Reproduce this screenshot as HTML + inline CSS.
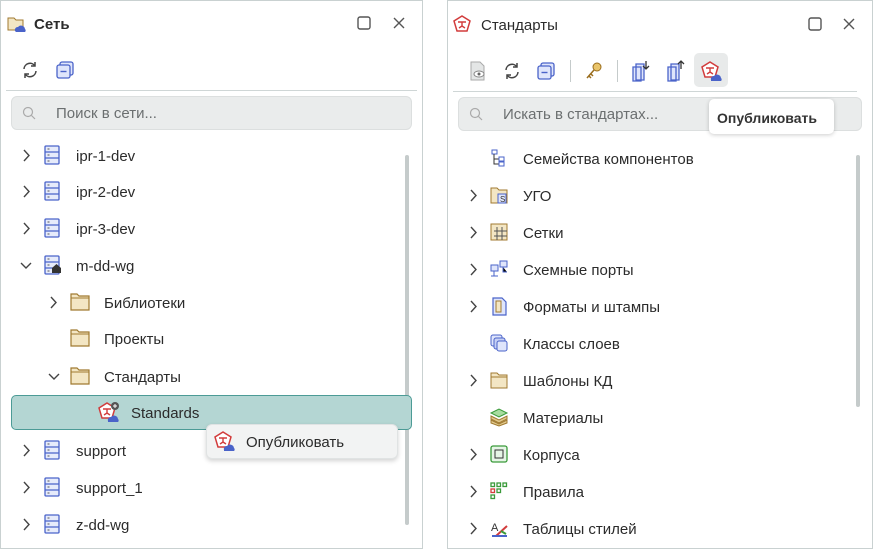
<!DOCTYPE html>
<html><head><meta charset="utf-8"><style>
*{box-sizing:border-box;margin:0;padding:0}
body{width:873px;height:550px;background:#fff;font-family:"Liberation Sans","DejaVu Sans",sans-serif;color:#2b2b2b;position:relative;overflow:hidden;font-size:15px}
.panel{position:absolute;top:0;height:549px;border:1px solid #c9d1d1;background:#fff}
.abs{position:absolute}
.t{position:absolute;white-space:nowrap;line-height:18px}
.sep{position:absolute;height:1px;background:#cfd6d6}
.search{position:absolute;height:34px;background:#eaecec;border:1px solid #dcdfdf;border-radius:6px}
.sb{position:absolute;width:4px;background:#c5cbcb;border-radius:2px}
svg{position:absolute;overflow:visible}
</style></head><body>

<div class="panel" style="left:0;width:423px"></div>
<div class="panel" style="left:447px;width:426px"></div>

<!-- LEFT title -->
<svg style="left:7px;top:14px" width="20" height="20" viewBox="0 0 20 20"><path d="M1 4h6l2 2h7v10H1z" fill="#f3e6c4" stroke="#a07a30"/><path d="M8 17a3 3 0 0 1 3-4 4 4 0 0 1 7 2 2 2 0 0 1 0 3H9z" fill="#4a63c9"/></svg>
<div class="t" style="left:34px;top:16px;font-weight:bold">Сеть</div>
<svg style="left:357px;top:16px" width="14" height="14"><rect x="1" y="1" width="12" height="12" rx="2" fill="none" stroke="#555" stroke-width="1.4"/></svg>
<svg style="left:393px;top:17px" width="12" height="12"><path d="M1 1L11 11M11 1L1 11" stroke="#555" stroke-width="1.4"/></svg>
<svg style="left:21px;top:61px" width="18" height="18" viewBox="0 0 18 18"><path d="M3 8a6 6 0 0 1 11-3M15 10a6 6 0 0 1-11 3" fill="none" stroke="#444" stroke-width="1.5"/><path d="M14 1v4h-4M4 17v-4h4" fill="none" stroke="#444" stroke-width="1.5"/></svg>
<svg style="left:56px;top:61px" width="18" height="18"><rect x="4" y="1" width="13" height="13" rx="2" fill="#dfe5fb" stroke="#4a63c9" stroke-width="1.3"/><rect x="1" y="4" width="13" height="13" rx="2" fill="#dfe5fb" stroke="#4a63c9" stroke-width="1.3"/><path d="M4.5 10.5h6" stroke="#4a63c9" stroke-width="1.4"/></svg>
<div class="sep" style="left:6px;top:90px;width:411px"></div>
<div class="search" style="left:11px;top:96px;width:401px"></div>
<svg style="left:22px;top:106px" width="14" height="14"><circle cx="6" cy="6" r="4.5" fill="none" stroke="#aaa" stroke-width="1.2"/><path d="M9.5 9.5L13 13" stroke="#aaa" stroke-width="1.2"/></svg>
<div class="t" style="left:56px;top:105px;color:#6b6f70">Поиск в сети...</div>
<div class="sb" style="left:405px;top:155px;height:370px"></div>

<div class="abs" style="left:11px;top:395px;width:401px;height:35px;background:#b4d6d3;border:1px solid #4c9b96;border-radius:5px"></div>
<div class="abs" style="left:206px;top:424px;width:192px;height:35px;background:#f2f3f3;border:1px solid #e0e3e3;border-radius:6px;box-shadow:0 2px 5px rgba(0,0,0,.18)"></div>

<div id="L"></div>

<!-- RIGHT title -->
<svg style="left:453px;top:15px" width="18" height="18" viewBox="0 0 18 18"><path d="M9 1l8 5-3 10H4L1 6z" fill="#fff" stroke="#d23c3c" stroke-width="1.5"/><path d="M5 7h8M9 7v4M6 13l3-2 3 2" stroke="#d23c3c" stroke-width="1.4" fill="none"/></svg>
<div class="t" style="left:481px;top:17px">Стандарты</div>
<svg style="left:808px;top:17px" width="14" height="14"><rect x="1" y="1" width="12" height="12" rx="2" fill="none" stroke="#555" stroke-width="1.4"/></svg>
<svg style="left:843px;top:18px" width="12" height="12"><path d="M1 1L11 11M11 1L1 11" stroke="#555" stroke-width="1.4"/></svg>
<div class="abs" style="left:694px;top:53px;width:34px;height:34px;background:#e8eaea;border-radius:5px"></div>
<svg style="left:469px;top:61px" width="18" height="20"><path d="M2 1h9l4 4v14H2z" fill="#e4e6e6" stroke="#aaa"/><ellipse cx="10" cy="13" rx="5" ry="3" fill="#fff" stroke="#888"/><circle cx="10" cy="13" r="1.5" fill="#666"/></svg>
<svg style="left:503px;top:62px" width="18" height="18" viewBox="0 0 18 18"><path d="M3 8a6 6 0 0 1 11-3M15 10a6 6 0 0 1-11 3" fill="none" stroke="#444" stroke-width="1.5"/><path d="M14 1v4h-4M4 17v-4h4" fill="none" stroke="#444" stroke-width="1.5"/></svg>
<svg style="left:537px;top:62px" width="18" height="18"><rect x="4" y="1" width="13" height="13" rx="2" fill="#dfe5fb" stroke="#4a63c9" stroke-width="1.3"/><rect x="1" y="4" width="13" height="13" rx="2" fill="#dfe5fb" stroke="#4a63c9" stroke-width="1.3"/><path d="M4.5 10.5h6" stroke="#4a63c9" stroke-width="1.4"/></svg>
<div class="abs" style="left:570px;top:60px;width:1px;height:22px;background:#c5cbcb"></div>
<svg style="left:585px;top:62px" width="18" height="18"><circle cx="12" cy="5" r="4" fill="#e9c46a" stroke="#9a6d1d"/><path d="M9 8L2 16M4 14l2 2M6 12l2 2" stroke="#9a6d1d" stroke-width="1.5"/></svg>
<div class="abs" style="left:617px;top:60px;width:1px;height:22px;background:#c5cbcb"></div>
<svg style="left:632px;top:60px" width="18" height="22"><path d="M4 4h8v16H4z M1 7h8v14H1z" fill="#dfe5fb" stroke="#4a63c9" stroke-width="1.3"/><path d="M14 1v8M11 6l3 3 3-3" stroke="#333" stroke-width="1.3" fill="none"/></svg>
<svg style="left:667px;top:60px" width="18" height="22"><path d="M4 4h8v16H4z M1 7h8v14H1z" fill="#dfe5fb" stroke="#4a63c9" stroke-width="1.3"/><path d="M14 9V1M11 4l3-3 3 3" stroke="#333" stroke-width="1.3" fill="none"/></svg>
<svg style="left:701px;top:61px" width="22" height="20" viewBox="0 0 22 20"><path d="M9 1l8 5-3 10H4L1 6z" fill="#fff" stroke="#d23c3c" stroke-width="1.5"/><path d="M5 7h8M9 7v4M6 13l3-2 3 2" stroke="#d23c3c" stroke-width="1.4" fill="none"/><path d="M10 19a3 3 0 0 1 3-4 4 4 0 0 1 7 2 2 2 0 0 1 0 3H10z" fill="#4a63c9"/></svg>
<div class="sep" style="left:453px;top:91px;width:404px"></div>
<div class="search" style="left:458px;top:97px;width:404px"></div>
<svg style="left:469px;top:107px" width="14" height="14"><circle cx="6" cy="6" r="4.5" fill="none" stroke="#aaa" stroke-width="1.2"/><path d="M9.5 9.5L13 13" stroke="#aaa" stroke-width="1.2"/></svg>
<div class="t" style="left:503px;top:106px;color:#6b6f70">Искать в стандартах...</div>
<div class="abs" style="left:709px;top:99px;width:125px;height:35px;background:#fff;border-radius:5px;box-shadow:0 1px 4px rgba(0,0,0,.2)"></div>
<div class="t" style="left:717px;top:109px;font-weight:bold;font-size:14px;color:#333">Опубликовать</div>
<div class="sb" style="left:856px;top:155px;height:252px"></div>

<div id="R"></div>

<script>
function chev(x,y,down){return down?`<svg style="left:${x-5}px;top:${y-3}px" width="12" height="8"><path d="M1 1l5 5 5-5" fill="none" stroke="#444" stroke-width="1.4"/></svg>`:`<svg style="left:${x-2}px;top:${y-6}px" width="8" height="13"><path d="M1 1l5 5.5L1 12" fill="none" stroke="#444" stroke-width="1.4"/></svg>`}
function server(x,y){return `<svg style="left:${x}px;top:${y-10}px" width="16" height="20"><rect x="1" y="1" width="14" height="18" rx="1" fill="#e6ebfb" stroke="#4a63c9" stroke-width="1.3"/><path d="M1 7h14M1 13h14" stroke="#4a63c9" stroke-width="1.2"/><path d="M3.5 4h2M3.5 10h2M3.5 16h2" stroke="#555" stroke-width="1"/></svg>`}
function folder(x,y){return `<svg style="left:${x}px;top:${y-9}px" width="20" height="18"><path d="M1 1h6l2 2h10v14H1z" fill="#f3e6c4" stroke="#a07a30" stroke-width="1.2"/><path d="M1 5h18" stroke="#a07a30"/></svg>`}
function pub(x,y,plus){return `<svg style="left:${x}px;top:${y-10}px" width="22" height="20" viewBox="0 0 22 20"><path d="M9 1l8 5-3 10H4L1 6z" fill="#fff" stroke="#d23c3c" stroke-width="1.5"/><path d="M5 7h8M9 7v4M6 13l3-2 3 2" stroke="#d23c3c" stroke-width="1.4" fill="none"/><path d="M10 19a3 3 0 0 1 3-4 4 4 0 0 1 7 2 2 2 0 0 1 0 3H10z" fill="#4a63c9"/>${plus?'<circle cx="17" cy="4" r="4" fill="#555"/><path d="M17 2v4M15 4h4" stroke="#fff"/>':''}</svg>`}
function txt(x,y,s){return `<div class="t" style="left:${x}px;top:${y-7}px">${s}</div>`}
let h='';
[['ipr-1-dev',155],['ipr-2-dev',191],['ipr-3-dev',228]].forEach(([s,y])=>{h+=chev(25,y)+server(44,y)+txt(76,y,s)});
h+=chev(25,265,1)+server(44,265)+`<svg style="left:52px;top:264px" width="9" height="9"><path d="M0 4L4.5 0 9 4v5H0z" fill="#333"/></svg>`+txt(76,265,'m-dd-wg');
h+=chev(52,302)+folder(70,302)+txt(104,302,'Библиотеки');
h+=folder(70,338)+txt(104,338,'Проекты');
h+=chev(53,376,1)+folder(70,376)+txt(104,376,'Стандарты');
h+=pub(98,412,1)+txt(131,412,'Standards');
h+=pub(214,441,0)+txt(246,441,'Опубликовать');
[['support',450],['support_1',487],['z-dd-wg',524]].forEach(([s,y])=>{h+=chev(25,y)+server(44,y)+txt(76,y,s)});
document.getElementById('L').innerHTML=h;
let r='';
const rows=[['Семейства компонентов',158,0,'<rect x="2" y="1" width="5" height="4" fill="none" stroke="#4a63c9"/><path d="M4 5v10h5M4 10h5" stroke="#333" fill="none"/><rect x="9" y="8" width="5" height="4" fill="none" stroke="#4a63c9"/><rect x="9" y="13" width="5" height="4" fill="none" stroke="#4a63c9"/>'],
['УГО',195,1,'<path d="M1 2h6l2 2h8v13H1z" fill="#f3e6c4" stroke="#a07a30"/><rect x="8" y="8" width="8" height="9" fill="#dfe5fb" stroke="#4a63c9"/><text x="10" y="16" font-size="8" fill="#333">S</text>'],
['Сетки',232,1,'<rect x="1" y="1" width="16" height="16" fill="#f3e6c4" stroke="#a07a30"/><path d="M7 4v13M12 4v13M4 8h13M4 13h13" stroke="#555"/>'],
['Схемные порты',269,1,'<rect x="1" y="5" width="7" height="6" fill="#dfe5fb" stroke="#4a63c9"/><rect x="10" y="1" width="7" height="6" fill="#dfe5fb" stroke="#4a63c9"/><path d="M4 11v5M1 16h7M13 7v5h4" stroke="#4a63c9"/>'],
['Форматы и штампы',306,1,'<path d="M3 1h9l4 4v13H3z" fill="#dfe5fb" stroke="#4a63c9" stroke-width="1.2"/><path d="M6 4h5v11H6z" fill="#f3e6c4" stroke="#a07a30"/>'],
['Классы слоев',343,0,'<rect x="1" y="1" width="11" height="11" rx="2" fill="#dfe5fb" stroke="#4a63c9"/><rect x="4" y="4" width="11" height="11" rx="2" fill="#c6d0f5" stroke="#4a63c9"/><rect x="7" y="7" width="10" height="10" rx="2" fill="#dfe5fb" stroke="#4a63c9"/>'],
['Шаблоны КД',380,1,'<path d="M1 2h6l2 2h8v13H1z" fill="#f3e6c4" stroke="#a07a30"/><path d="M1 6h16" stroke="#a07a30"/>'],
['Материалы',417,0,'<path d="M1 12l8 4 8-4v3l-8 3-8-3z" fill="#e1c88c" stroke="#a07a30"/><path d="M1 8l8 4 8-4v3l-8 4-8-4z" fill="#e1c88c" stroke="#a07a30"/><path d="M1 5l8-4 8 4-8 4z" fill="#a8dca0" stroke="#3a9a3a"/>'],
['Корпуса',454,1,'<rect x="1" y="1" width="16" height="16" rx="2" fill="#e6f5e6" stroke="#3a9a3a" stroke-width="1.3"/><rect x="5" y="5" width="8" height="8" fill="none" stroke="#333"/>'],
['Правила',491,1,'<g fill="none" stroke-width="1.3"><rect x="1" y="1" width="3.5" height="3.5" stroke="#3a9a3a"/><rect x="7" y="1" width="3.5" height="3.5" stroke="#3a9a3a"/><rect x="13" y="1" width="3.5" height="3.5" stroke="#3a9a3a"/><rect x="1" y="7" width="3.5" height="3.5" stroke="#d23c3c"/><rect x="7" y="7" width="3.5" height="3.5" stroke="#3a9a3a"/><rect x="1" y="13" width="3.5" height="3.5" stroke="#3a9a3a"/></g>'],
['Таблицы стилей',528,1,'<text x="1" y="12" font-size="11" fill="#333">A</text><path d="M6 17l11-10" stroke="#d23c3c" stroke-width="2"/><path d="M2 17h15" stroke="#4a63c9" stroke-width="2"/><path d="M11 12l5 3" stroke="#3a9a3a" stroke-width="2"/>']];
rows.forEach(([s,y,c,ic])=>{if(c)r+=chev(472,y);r+=`<svg style="left:490px;top:${y-9}px" width="18" height="18" viewBox="0 0 18 18">${ic}</svg>`+txt(523,y,s)});
document.getElementById('R').innerHTML=r;
</script>
</body></html>
